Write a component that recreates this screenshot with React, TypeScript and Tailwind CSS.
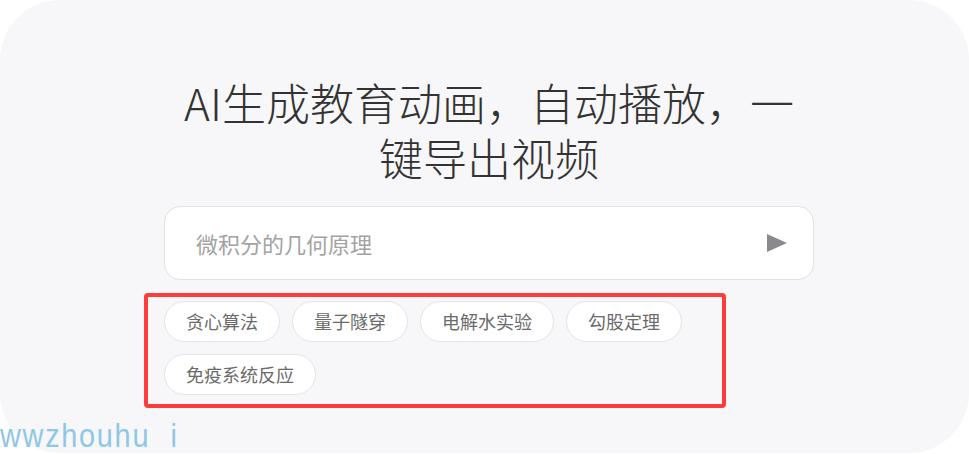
import React from "react";

const TOPICS = ["贪心算法", "量子隧穿", "电解水实验", "勾股定理", "免疫系统反应"];

const SendIcon = () => (
  <svg width="20" height="18" viewBox="0 0 20 18" className="shrink-0">
    <polygon points="0,0 20,9 0,18" fill="#8a8a8e" />
  </svg>
);

export default function App() {
  return (
    <div
      className="relative h-[454px] w-[969px] overflow-hidden bg-white"
      style={{ fontFamily: '"Noto Sans CJK SC", "Noto Sans", sans-serif' }}
    >
      <div className="flex h-[453px] w-[969px] flex-col items-center rounded-[60px] bg-[#f7f7f9] pl-[9px] pt-[75px]">
        <h1 className="w-[650px] text-center text-[44px] font-light leading-[55px] text-[#333333]">
          AI生成教育动画，自动播放，一键导出视频
        </h1>

        <div className="mt-[21px] flex h-[74px] w-[650px] items-center rounded-2xl border border-[#e2e2e6] bg-white pl-[31px] pr-[26px]">
          <input
            className="min-w-0 flex-1 bg-transparent text-[22px] text-[#333] outline-none placeholder:text-[#a3a3a3]"
            placeholder="微积分的几何原理"
          />
          <SendIcon />
        </div>

        <div className="relative mt-[21px] flex w-[650px] flex-wrap gap-3">
          {TOPICS.map((t) => (
            <button
              key={t}
              className="rounded-full border border-[#e4e4e7] bg-white px-[21px] py-1.5 text-[18px] leading-[27px] text-[#6b6b6b]"
            >
              {t}
            </button>
          ))}
          <div className="pointer-events-none absolute left-[-20px] top-[-8px] h-[115px] w-[582px] rounded-[4px] border-4 border-[#ff3b3b]" />
        </div>
      </div>

      <div
        className="absolute left-0 top-[415px] origin-left scale-x-[0.85] text-[34px] leading-[40px] tracking-[2px] text-[#8fc7e6]"
        style={{ fontFamily: '"Liberation Sans", sans-serif' }}
      >
        wwzhouhu<span className="ml-[24px]">i</span>
      </div>
    </div>
  );
}
